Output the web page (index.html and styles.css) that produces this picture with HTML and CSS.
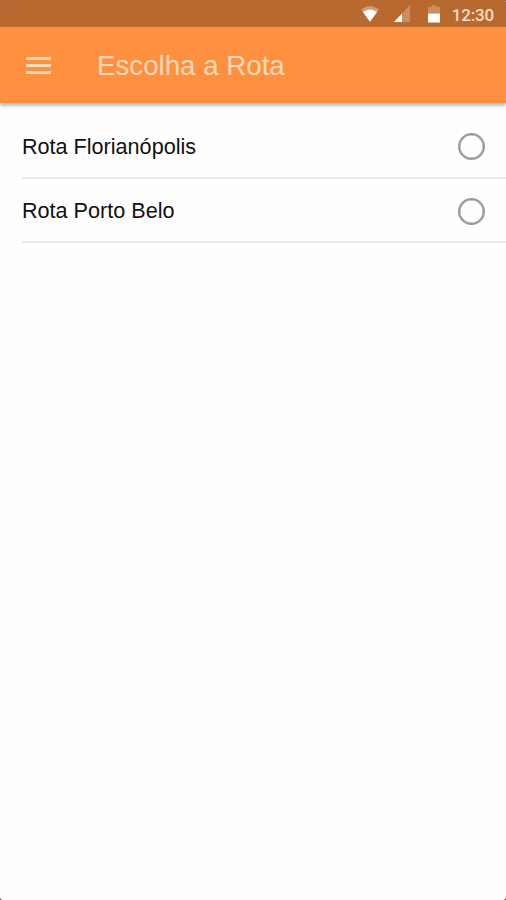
FILE: index.html
```html
<!DOCTYPE html>
<html lang="pt-BR">
<head>
  <meta charset="UTF-8">
  <meta name="viewport" content="width=device-width, initial-scale=1.0">
  <title>Escolha a Rota</title>
  <link rel="stylesheet" href="styles.css">
</head>
<body>
  <div class="screen">
    <div class="status-bar">
      <svg class="wifi" width="18" height="16" viewBox="0 0 20 16" preserveAspectRatio="none">
        <path d="M0 3.5Q10 -3.5 20 3.5L10 16Z" fill="#fff" fill-opacity="0.35"/>
        <path d="M2.2 6Q10 0.8 17.8 6L10 15.7Z" fill="#fff"/>
      </svg>
      <svg class="signal" width="16" height="17" viewBox="0 0 17 17" preserveAspectRatio="none">
        <path d="M17 0V17H0Z" fill="#fff" fill-opacity="0.25"/>
        <path d="M8.5 8.5V17H0Z" fill="#fff"/>
      </svg>
      <svg class="battery" width="12" height="18" viewBox="0 0 12 18">
        <path d="M0 2H3.5V0H8.5V2H12V8.5H0Z" fill="#fff" fill-opacity="0.25"/>
        <path d="M0 8.5H12V17.5H0Z" fill="#fff"/>
      </svg>
      <span class="clock">12:30</span>
    </div>

    <header class="toolbar">
      <button class="menu-btn" aria-label="Menu">
        <span></span>
        <span></span>
        <span></span>
      </button>
      <h1>Escolha a Rota</h1>
    </header>

    <main class="route-list">
      <label class="route">
        Rota Florianópolis
        <input type="radio" name="rota">
      </label>
      <label class="route">
        Rota Porto Belo
        <input type="radio" name="rota">
      </label>
    </main>
  </div>
</body>
</html>
```

FILE: styles.css
```css
:root {
  --primary: #ff9040;
  --primary-dark: #b8692f;
  --on-primary: #ffd9b8;
  --divider: #ececec;
}

* {
  box-sizing: border-box;
  margin: 0;
  padding: 0;
}

body {
  font-family: "Liberation Sans", Arial, sans-serif;
  background: #444;
  overflow: hidden;
}

.screen {
  height: 100vh;
  background: #fefefe;
  border-radius: 3px;
  overflow: hidden;
}

.status-bar {
  display: flex;
  height: 27px;
  padding: 5px 12px 0 0;
  justify-content: flex-end;
  align-items: flex-start;
  background: var(--primary-dark);
}

.wifi {
  margin: 1px 15px 0 0;
}

.signal {
  margin-right: 18px;
}

.battery {
  margin-right: 12px;
}

.clock {
  font-family: Roboto, sans-serif;
  font-size: 17px;
  font-weight: 500;
  line-height: 20px;
  letter-spacing: -0.2px;
  color: #f7dfcd;
}

.toolbar {
  display: flex;
  align-items: center;
  height: 76px;
  padding-left: 26px;
  background: var(--primary);
  box-shadow: 0 3px 3px rgba(0, 0, 0, 0.25);
}

.menu-btn {
  display: flex;
  flex-direction: column;
  gap: 4px;
  width: 25px;
  margin-right: 46px;
  border: none;
  background: none;
  cursor: pointer;
}

.menu-btn span {
  height: 3px;
  background: var(--on-primary);
}

.toolbar h1 {
  padding-top: 1px;
  font-size: 27.7px;
  font-weight: 400;
  color: var(--on-primary);
}

.route-list {
  padding: 11px 0 0 22px;
}

.route {
  display: flex;
  justify-content: space-between;
  align-items: center;
  height: 64px;
  padding: 2px 21px 0 0;
  border-bottom: 2px solid var(--divider);
  font-size: 21.6px;
  color: #111;
  cursor: pointer;
}

.route:first-child {
  height: 65px;
}

.route input {
  appearance: none;
  width: 27px;
  height: 27px;
  border: 2px solid #999;
  border-radius: 50%;
  box-shadow: inset 0 0 0 0.5px #999;
}

.route input:checked {
  border-color: var(--primary);
  background: var(--primary);
  box-shadow: inset 0 0 0 4px #fff;
}
```
